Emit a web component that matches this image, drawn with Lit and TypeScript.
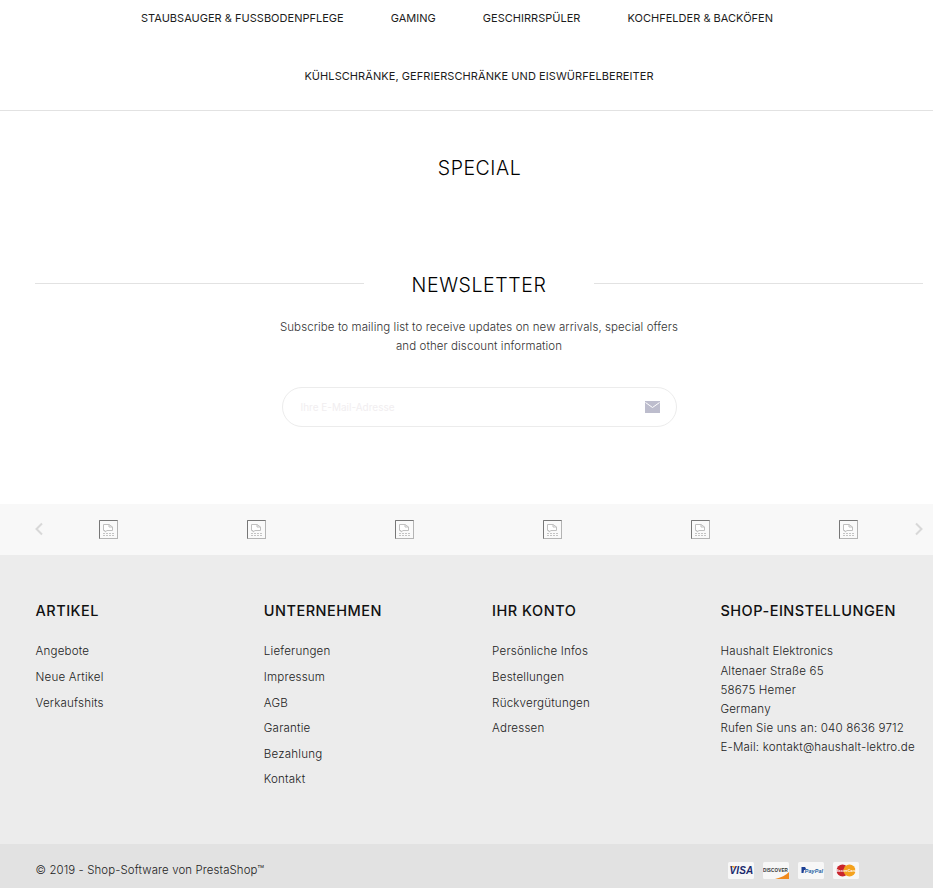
import { LitElement, html, css, svg } from "lit";
import { customElement } from "lit/decorators.js";

const broken = html`<svg class="ph" width="19" height="19" viewBox="0 0 19 19">
  <rect x=".5" y=".5" width="18" height="18" fill="#fafafa" stroke="#b4b4b4"/>
  <path d="M.5 18.5V.5H18.5" fill="none" stroke="#777"/>
  <path d="M4.5 4.5H10L13.5 7V10.5H8L6 12V10.5H4.5Z" fill="#fff" stroke="#c0c0c0"/>
  <path d="M10 4.5V7H13.5" fill="none" stroke="#c0c0c0"/>
  <path d="M4 13.5H15M4 15.5H15" stroke="#c4c4c4" stroke-dasharray="2 1"/>
</svg>`;

const Artikel = ["Angebote", "Neue Artikel", "Verkaufshits"];
const Firma = ["Lieferungen", "Impressum", "AGB", "Garantie", "Bezahlung", "Kontakt"];
const Konto = ["Persönliche Infos", "Bestellungen", "Rückvergütungen", "Adressen"];
const Shop = ["Haushalt Elektronics", "Altenaer Straße 65", "58675 Hemer", "Germany", "Rufen Sie uns an: 040 8636 9712", "E-Mail: kontakt@haushalt-lektro.de"];

@customElement("app-root")
export class AppRoot extends LitElement {
  static styles = css`
    :host { display: block; width: 933px; height: 888px; overflow: hidden; background: #fff;
      font-family: "Inter", "Liberation Sans", sans-serif; color: #3a3a3a; }
    .page { width: 958px; }
    nav { height: 110px; border-bottom: 1px solid #e2e2e2; box-sizing: content-box; }
    .row { display: flex; justify-content: center; align-items: center; gap: 47px;
      font-size: 11px; color: #1c1c1c; height: 36px; letter-spacing: .02px; }
    .row.first { margin-bottom: 22px; padding-right: 44px; }
    .row.second { letter-spacing: .07px; }
    .special { height: 161px; box-sizing: border-box; padding: 45px 0 0 1px; text-align: center;
      font-size: 19.5px; font-weight: 300; color: #000; line-height: 24px; letter-spacing: .55px; }
    .news-head { display: flex; align-items: center; gap: 48px; padding: 0 35px; height: 26px; }
    .news-head i { flex: 1; height: 1px; background: #e2e2e2; margin-top: -3px; }
    .news-head span { font-size: 19.5px; font-weight: 300; color: #000; line-height: 26px; letter-spacing: .6px; }
    .sub { margin: 20px 0 0; text-align: center; font-size: 11.5px; line-height: 19px; font-weight: 300; color: #333; letter-spacing: .09px; }
    .field { width: 395px; height: 40px; margin: 31px auto 0; box-sizing: border-box; border: 1px solid #ececec;
      border-radius: 20px; display: flex; align-items: center; justify-content: space-between; padding: 0 16px 0 18px; }
    .field span { font-size: 10px; color: #f1eef0; }
    .band { margin-top: 77px; width: 933px; height: 51px; background: #f8f8f8; position: relative;
      display: flex; align-items: center; padding-left: 99px; box-sizing: border-box; gap: 129px; }
    .ph { flex: none; margin-top: 0; }
    .arrow { position: absolute; top: 18px; }
    .arrow.l { left: 34px; }
    .arrow.r { left: 914px; }
    .foot { background: #ececec; width: 933px; height: 289px; box-sizing: border-box; padding: 47px 0 0 35.5px;
      display: grid; grid-template-columns: repeat(4, 228.3px); }
    h4 { margin: 0 0 24.4px; font-size: 14.5px; line-height: 18px; font-weight: 500; color: #111; letter-spacing: .5px; }
    .links div { font-size: 11.6px; line-height: 14px; margin-bottom: 11.6px; font-weight: 300; color: #222; white-space: nowrap; letter-spacing: .18px; }
    .addr div { font-size: 11.6px; line-height: 19.2px; font-weight: 300; color: #222; white-space: nowrap; letter-spacing: .17px; }
    .addr { margin-top: -2.1px; }
    .bottom { background: #e2e2e2; width: 933px; height: 44px; display: flex; align-items: center;
      box-sizing: border-box; padding: 8px 74px 0 35.5px; justify-content: space-between; font-size: 11.4px; font-weight: 300; color: #222; letter-spacing: .13px; }
    .cards { display: flex; gap: 9px; }
    .card { width: 26px; height: 17px; display: block; }
    .card text { font-family: "Liberation Sans", sans-serif; }
  `;

  private arrow(dir: "l" | "r") {
    const d = dir === "l" ? "M8 1.5L2.5 7 8 12.5" : "M2 1.5L7.5 7 2 12.5";
    return html`<svg class="arrow ${dir}" width="10" height="14" viewBox="0 0 10 14"><path d="${d}" fill="none" stroke="#d8d8d8" stroke-width="2"/></svg>`;
  }

  private card(body: unknown) {
    return html`<svg class="card" viewBox="0 0 26 17"><rect width="26" height="17" rx="1.5" fill="#f7f7f7"/>${body}</svg>`;
  }

  render() {
    return html`<div class="page">
      <nav>
        <div class="row first"><span>STAUBSAUGER &amp; FUSSBODENPFLEGE</span><span>GAMING</span><span>GESCHIRRSPÜLER</span><span>KOCHFELDER &amp; BACKÖFEN</span></div>
        <div class="row second"><span>KÜHLSCHRÄNKE, GEFRIERSCHRÄNKE UND EISWÜRFELBEREITER</span></div>
      </nav>
      <div class="special">SPECIAL</div>
      <div class="news-head"><i></i><span>NEWSLETTER</span><i></i></div>
      <p class="sub">Subscribe to mailing list to receive updates on new arrivals, special offers<br>and other discount information</p>
      <div class="field"><span>Ihre E-Mail-Adresse</span>
        <svg width="15" height="12" viewBox="0 0 15 12"><rect width="15" height="12" fill="#bdbdcd"/><path d="M.5 1.5L7.5 6.5 14.5 1.5" fill="none" stroke="#fff"/></svg>
      </div>
      <div class="band">${this.arrow("l")}${[0, 1, 2, 3, 4, 5].map(() => broken)}${this.arrow("r")}</div>
      <div class="foot">
        <div class="links"><h4>ARTIKEL</h4>${Artikel.map((t) => html`<div>${t}</div>`)}</div>
        <div class="links"><h4>UNTERNEHMEN</h4>${Firma.map((t) => html`<div>${t}</div>`)}</div>
        <div class="links"><h4>IHR KONTO</h4>${Konto.map((t) => html`<div>${t}</div>`)}</div>
        <div><h4>SHOP-EINSTELLUNGEN</h4><div class="addr">${Shop.map((t) => html`<div>${t}</div>`)}</div></div>
      </div>
      <div class="bottom"><span>© 2019 - Shop-Software von PrestaShop™</span>
        <div class="cards">
          ${this.card(svg`<path d="M3 4L6.5 4 7 7Z" fill="#f0a030"/><text x="13.5" y="12" text-anchor="middle" font-size="10" font-weight="700" font-style="italic" fill="#1a2a6c">VISA</text>`)}
          ${this.card(svg`<text x="12.5" y="9.5" text-anchor="middle" font-size="4.6" font-weight="700" fill="#333">DISCOVER</text><path d="M12 17C18 15.5 23 13.5 26 10V17Z" fill="#f08a1d"/>`)}
          ${this.card(svg`<path d="M3.5 5H7Q8.5 6 7.5 8H6L5.5 11H3.5Z" fill="#1c3f94"/><text x="16" y="10.5" text-anchor="middle" font-size="5.4" font-weight="700" font-style="italic" fill="#1c5fa4">PayPal</text>`)}
          ${this.card(svg`<circle cx="9.5" cy="8.5" r="6" fill="#c9252c"/><circle cx="16.5" cy="8.5" r="6" fill="#f4a21d"/><text x="13" y="10" text-anchor="middle" font-size="3.6" font-weight="700" fill="#fff">MasterCard</text>`)}
        </div>
      </div>
    </div>`;
  }
}
